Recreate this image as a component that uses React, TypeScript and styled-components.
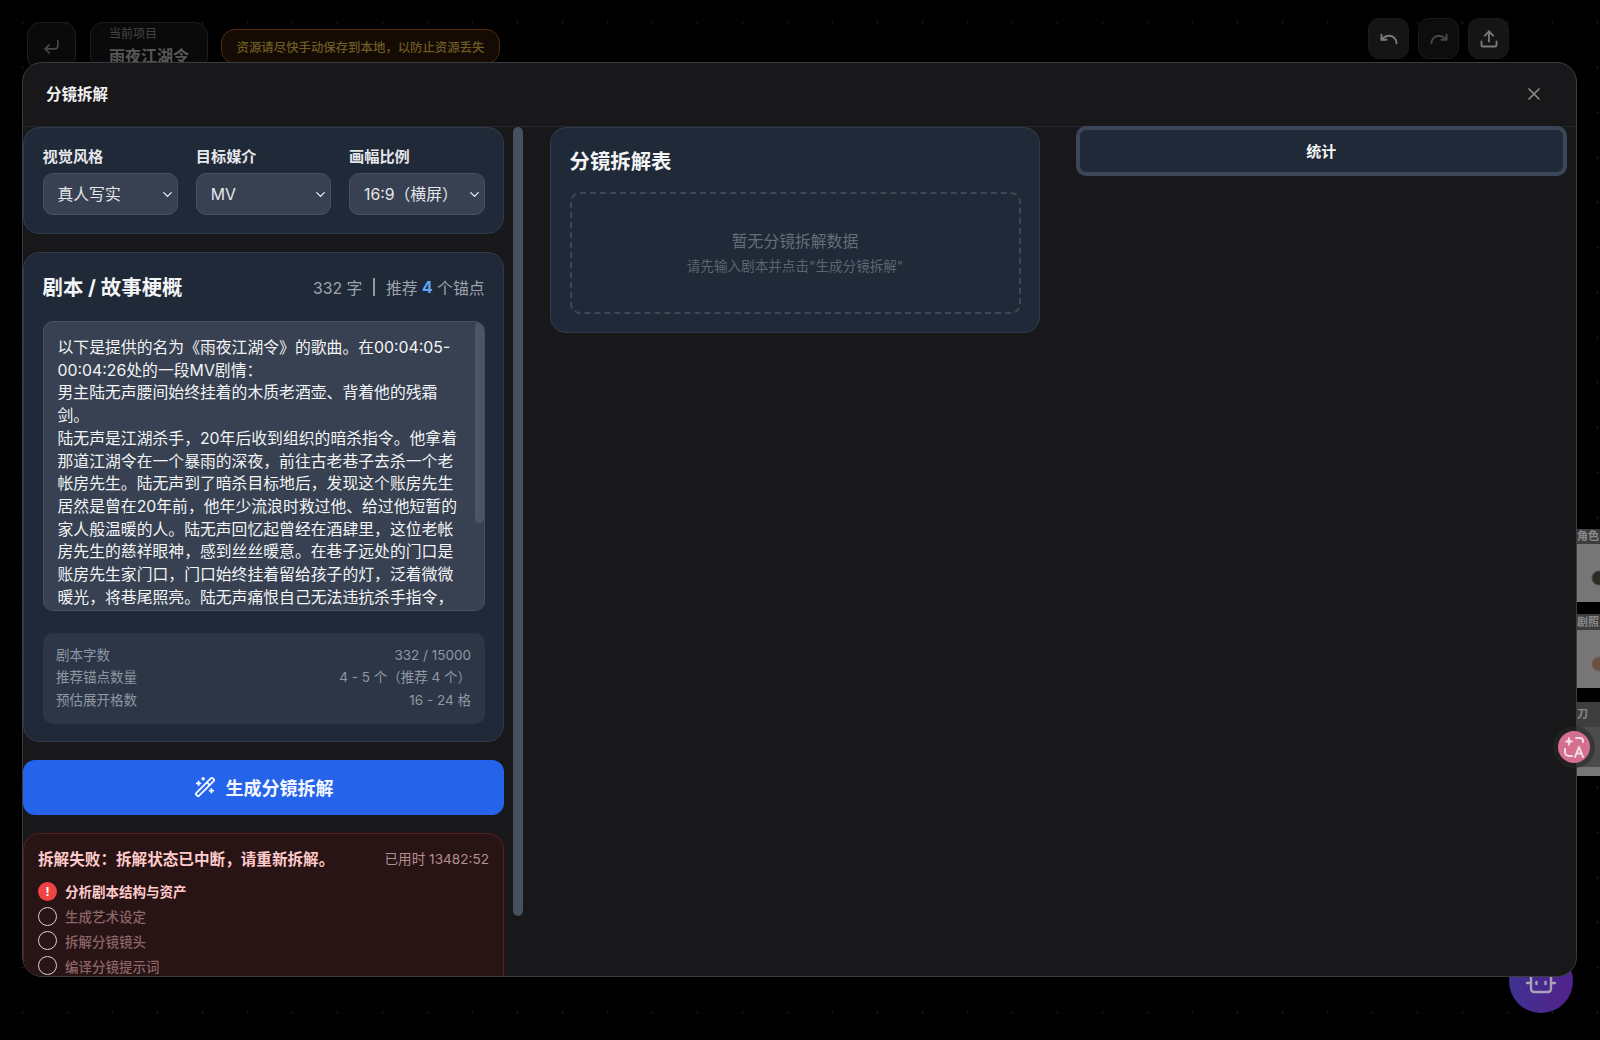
import { createGlobalStyle, styled } from "styled-components";
import {
  ChevronDown,
  CornerDownLeft,
  Redo,
  Undo,
  Upload,
  WandSparkles,
  X,
} from "lucide-react";

const fontStack = `Inter, "Noto Sans CJK SC", "Noto Sans", sans-serif`;

const selects = [
  { label: "视觉风格", value: "真人写实" },
  { label: "目标媒介", value: "MV" },
  { label: "画幅比例", value: "16:9（横屏）" },
];

const scriptLines = [
  "以下是提供的名为《雨夜江湖令》的歌曲。在00:04:05-",
  "00:04:26处的一段MV剧情：",
  "男主陆无声腰间始终挂着的木质老酒壶、背着他的残霜",
  "剑。",
  "陆无声是江湖杀手，20年后收到组织的暗杀指令。他拿着",
  "那道江湖令在一个暴雨的深夜，前往古老巷子去杀一个老",
  "帐房先生。陆无声到了暗杀目标地后，发现这个账房先生",
  "居然是曾在20年前，他年少流浪时救过他、给过他短暂的",
  "家人般温暖的人。陆无声回忆起曾经在酒肆里，这位老帐",
  "房先生的慈祥眼神，感到丝丝暖意。在巷子远处的门口是",
  "账房先生家门口，门口始终挂着留给孩子的灯，泛着微微",
  "暖光，将巷尾照亮。陆无声痛恨自己无法违抗杀手指令，",
];

const stats = [
  { label: "剧本字数", value: "332 / 15000" },
  { label: "推荐锚点数量", value: "4 - 5 个（推荐 4 个）" },
  { label: "预估展开格数", value: "16 - 24 格" },
];

const steps = ["分析剧本结构与资产", "生成艺术设定", "拆解分镜镜头", "编译分镜提示词"];

export default function App() {
  return (
    <>
      <GlobalStyle />
      <Page>
        <TopBar>
          <TopLeft>
            <BackButton>
              <CornerDownLeft size={19} strokeWidth={2} />
            </BackButton>
            <ProjectBox>
              <ProjectCaption>当前项目</ProjectCaption>
              <ProjectName>雨夜江湖令</ProjectName>
            </ProjectBox>
            <WarningPill>资源请尽快手动保存到本地，以防止资源丢失</WarningPill>
          </TopLeft>
          <TopRight>
            <HistoryButton>
              <Undo size={20} strokeWidth={2.4} />
            </HistoryButton>
            <HistoryButton $disabled>
              <Redo size={20} strokeWidth={2.4} />
            </HistoryButton>
            <HistoryButton>
              <Upload size={20} strokeWidth={2.2} />
            </HistoryButton>
          </TopRight>
        </TopBar>

        <ThumbRail>
          <ThumbLabel $height={15}>角色</ThumbLabel>
          <ThumbImage $height={58} $spot="#2c2a22" />
          <ThumbGap $height={12} />
          <ThumbLabel $height={16}>剧照</ThumbLabel>
          <ThumbImage $height={58} $spot="#6b5140" />
          <ThumbGap $height={14} />
          <ThumbLabel $height={25}>刀</ThumbLabel>
          <ThumbImage $height={40} $dark />
          <ThumbImage $height={9} />
        </ThumbRail>

        <BotBubble>
          <svg width="34" height="34" viewBox="0 0 34 34" fill="none" stroke="#a9a3b5" strokeWidth="2.4" strokeLinecap="round">
            <rect x="7" y="7" width="20" height="20" rx="3" />
            <path d="M3 18h4M27 18h4" />
            <path d="M12.500 17v2M21.500 17v2" />
          </svg>
        </BotBubble>

        <Modal>
          <ModalHeader>
            <ModalTitle>分镜拆解</ModalTitle>
            <CloseButton>
              <X size={20} strokeWidth={2} />
            </CloseButton>
          </ModalHeader>

          <ModalBody>
            <LeftColumn>
              <SettingsCard>
                {selects.map((item) => (
                  <Field key={item.label}>
                    <FieldLabel>{item.label}</FieldLabel>
                    <SelectBox>
                      <SelectInput defaultValue={item.value}>
                        <option>{item.value}</option>
                      </SelectInput>
                      <SelectChevron>
                        <ChevronDown size={15} strokeWidth={2.2} />
                      </SelectChevron>
                    </SelectBox>
                  </Field>
                ))}
              </SettingsCard>

              <ScriptCard>
                <ScriptHeader>
                  <CardHeading>剧本 / 故事梗概</CardHeading>
                  <ScriptMeta>
                    332 字<MetaDivider />推荐 <strong>4</strong> 个锚点
                  </ScriptMeta>
                </ScriptHeader>
                <ScriptArea>
                  {scriptLines.map((line) => (
                    <ScriptLine key={line}>{line}</ScriptLine>
                  ))}
                  <ScriptThumb />
                </ScriptArea>
                <StatsBox>
                  {stats.map((row) => (
                    <StatRow key={row.label}>
                      <span>{row.label}</span>
                      <span>{row.value}</span>
                    </StatRow>
                  ))}
                </StatsBox>
              </ScriptCard>

              <GenerateButton>
                <WandSparkles size={22} strokeWidth={2} />
                生成分镜拆解
              </GenerateButton>

              <ErrorCard>
                <ErrorHeader>
                  <ErrorTitle>拆解失败：拆解状态已中断，请重新拆解。</ErrorTitle>
                  <ErrorTime>已用时 13482:52</ErrorTime>
                </ErrorHeader>
                <StepList>
                  {steps.map((step, index) => (
                    <StepRow key={step} $active={index === 0}>
                      {index === 0 ? <StepAlert>!</StepAlert> : <StepCircle />}
                      {step}
                    </StepRow>
                  ))}
                </StepList>
              </ErrorCard>
            </LeftColumn>

            <ScrollTrack>
              <ScrollThumb />
            </ScrollTrack>

            <MiddleColumn>
              <TableCard>
                <CardHeading>分镜拆解表</CardHeading>
                <EmptyBox>
                  <EmptyTitle>暂无分镜拆解数据</EmptyTitle>
                  <EmptyHint>请先输入剧本并点击"生成分镜拆解"</EmptyHint>
                </EmptyBox>
              </TableCard>
            </MiddleColumn>

            <RightColumn>
              <StatsTab>统计</StatsTab>
            </RightColumn>
          </ModalBody>
        </Modal>

        <TranslateBubble>
          <svg width="24" height="24" viewBox="0 0 24 24" fill="none" stroke="#f1dfe4" strokeWidth="2" strokeLinecap="round" strokeLinejoin="round">
            <path d="M7 2.500c.4 2.600 1.400 3.600 4 4-2.600.4-3.600 1.400-4 4-.4-2.600-1.400-3.600-4-4 2.600-.4 3.600-1.400 4-4z" fill="#f1dfe4" strokeWidth="1" />
            <path d="M14 3h4a3 3 0 0 1 3 3v1" />
            <path d="M3 14v3a4 4 0 0 0 4 4h3" />
            <path d="M13 22l4-10 4 10M14.500 18.500h5" />
          </svg>
        </TranslateBubble>
      </Page>
    </>
  );
}

const GlobalStyle = createGlobalStyle`
  html, body {
    margin: 0;
    background: #000;
  }
  * {
    box-sizing: border-box;
  }
`;

const Page = styled.div`
  position: relative;
  width: 1600px;
  height: 1040px;
  overflow: hidden;
  background-color: #000;
  background-image: radial-gradient(circle, #131313 1px, transparent 1.2px);
  background-size: 45px 45px;
  font-family: ${fontStack};
`;

const TopBar = styled.header`
  display: flex;
  justify-content: space-between;
  align-items: flex-start;
  padding: 18px 91px 0 27px;
`;

const TopLeft = styled.div`
  display: flex;
  align-items: flex-start;
  gap: 14px;
  padding-top: 4px;
`;

const TopRight = styled.div`
  display: flex;
  gap: 9px;
`;

const BackButton = styled.div`
  display: flex;
  align-items: center;
  justify-content: center;
  width: 49px;
  height: 48px;
  border: 1px solid #1e1e1e;
  border-radius: 13px;
  background: #0a0a0a;
  color: #4a4a4a;
`;

const ProjectBox = styled.div`
  width: 118px;
  height: 48px;
  padding: 3px 0 0 18px;
  border: 1px solid #1e1e1e;
  border-radius: 13px;
  background: #0a0a0a;
`;

const ProjectCaption = styled.div`
  font-size: 12px;
  line-height: 16px;
  color: #454545;
`;

const ProjectName = styled.div`
  margin-top: 3px;
  font-size: 16px;
  line-height: 22px;
  font-weight: 700;
  color: #575757;
`;

const WarningPill = styled.div`
  display: flex;
  align-items: center;
  justify-content: center;
  width: 279px;
  height: 35px;
  margin: 7px 0 0 -1px;
  border: 1px solid #572a0d;
  border-radius: 14px;
  background: #140b05;
  font-size: 12.4px;
  font-weight: 500;
  color: #6f5c22;
  white-space: nowrap;
`;

const HistoryButton = styled.div<{ $disabled?: boolean }>`
  display: flex;
  align-items: center;
  justify-content: center;
  width: 41px;
  height: 41px;
  border: 1px solid #191919;
  border-radius: 11px;
  background: ${({ $disabled }) => ($disabled ? "#0d0d0d" : "#151515")};
  color: ${({ $disabled }) => ($disabled ? "#484848" : "#7b7b7b")};
`;

const ThumbRail = styled.aside`
  position: absolute;
  top: 529px;
  left: 1570px;
  width: 30px;
  display: flex;
  flex-direction: column;
`;

const ThumbLabel = styled.div<{ $height: number }>`
  height: ${({ $height }) => $height}px;
  padding-left: 7px;
  background: #3e3e3e;
  font-size: 11px;
  font-weight: 700;
  line-height: ${({ $height }) => $height}px;
  color: #8a8a8a;
  white-space: nowrap;
  overflow: hidden;
`;

const ThumbImage = styled.div<{ $height: number; $dark?: boolean; $spot?: string }>`
  height: ${({ $height }) => $height}px;
  background-color: ${({ $dark }) => ($dark ? "#4b4b4b" : "#767676")};
  background-image: ${({ $spot }) =>
    $spot ? `radial-gradient(circle at 29px 34px, ${$spot} 6px, transparent 8px)` : "none"};
`;

const ThumbGap = styled.div<{ $height: number }>`
  height: ${({ $height }) => $height}px;
  background: #000;
`;

const BotBubble = styled.div`
  position: absolute;
  top: 949px;
  left: 1509px;
  width: 64px;
  height: 64px;
  display: flex;
  align-items: flex-end;
  justify-content: center;
  padding-bottom: 14px;
  border-radius: 50%;
  background: linear-gradient(90deg, #3f3290, #52228c);
`;

const TranslateBubble = styled.div`
  position: absolute;
  top: 731px;
  left: 1558px;
  width: 32px;
  height: 32px;
  display: flex;
  align-items: center;
  justify-content: center;
  border-radius: 50%;
  background: #d56f90;
  box-shadow: 0 0 0 5px rgba(40, 40, 40, 0.55);
`;

const Modal = styled.section`
  position: absolute;
  top: 62px;
  left: 22px;
  width: 1555px;
  height: 915px;
  display: flex;
  flex-direction: column;
  overflow: hidden;
  border: 1px solid #3b3c3f;
  border-radius: 20px;
  background: #18181a;
`;

const ModalHeader = styled.div`
  flex: none;
  display: flex;
  align-items: center;
  justify-content: space-between;
  height: 64px;
  padding: 0 32px 3px 23px;
  border-bottom: 1px solid #26272a;
`;

const ModalTitle = styled.h2`
  margin: 0;
  font-size: 15.500px;
  font-weight: 700;
  color: #f1f1f1;
`;

const CloseButton = styled.div`
  display: flex;
  margin-top: 2px;
  color: #8a8a8a;
`;

const ModalBody = styled.div`
  flex: 1;
  min-height: 0;
  display: flex;
  align-items: flex-start;
`;

const LeftColumn = styled.div`
  flex: none;
  width: 481px;
  display: flex;
  flex-direction: column;
  gap: 18px;
`;

const SettingsCard = styled.div`
  display: grid;
  grid-template-columns: repeat(3, 135.500px);
  justify-content: space-between;
  height: 107px;
  padding: 18px 18.500px 0;
  border: 1px solid #2f3b4d;
  border-radius: 16px;
  background: #1f2937;
`;

const Field = styled.div`
  display: flex;
  flex-direction: column;
`;

const FieldLabel = styled.label`
  margin-bottom: 6px;
  font-size: 15.200px;
  line-height: 21px;
  font-weight: 600;
  color: #e5e7eb;
`;

const SelectBox = styled.div`
  position: relative;
`;

const SelectInput = styled.select`
  appearance: none;
  width: 100%;
  height: 42px;
  padding: 0 14px;
  border: 1px solid #465162;
  border-radius: 10px;
  background: #374151;
  font-family: inherit;
  font-size: 15.800px;
  color: #e5e7eb;
`;

const SelectChevron = styled.span`
  position: absolute;
  top: 14px;
  right: 3px;
  display: flex;
  color: #e5e7eb;
  pointer-events: none;
`;

const ScriptCard = styled.div`
  height: 490px;
  padding: 19px 18.500px 0;
  border: 1px solid #2f3b4d;
  border-radius: 16px;
  background: #1f2937;
`;

const ScriptHeader = styled.div`
  display: flex;
  align-items: center;
  justify-content: space-between;
  height: 30px;
`;

const CardHeading = styled.h3`
  margin: 0;
  padding-top: 1px;
  font-size: 20.400px;
  line-height: 30px;
  font-weight: 700;
  color: #f3f4f6;
`;

const ScriptMeta = styled.div`
  display: flex;
  align-items: center;
  font-size: 15.800px;
  color: #9ca3af;
  white-space: pre;

  strong {
    color: #60a5fa;
    font-weight: 700;
  }
`;

const MetaDivider = styled.i`
  width: 1.500px;
  height: 18px;
  margin: 0 11px;
  background: #8f97a3;
`;

const ScriptArea = styled.div`
  position: relative;
  height: 290px;
  margin-top: 19px;
  padding: 15px 14px 0;
  overflow: hidden;
  border: 1px solid #465162;
  border-radius: 10px;
  background: #374151;
`;

const ScriptLine = styled.div`
  font-size: 15.840px;
  line-height: 22.700px;
  color: #f3f4f6;
  white-space: nowrap;
`;

const ScriptThumb = styled.div`
  position: absolute;
  top: 0;
  right: 0;
  width: 9px;
  height: 201px;
  border-radius: 5px;
  background: #4b5563;
`;

const StatsBox = styled.div`
  display: flex;
  flex-direction: column;
  justify-content: center;
  height: 91px;
  margin-top: 22px;
  padding: 0 13.500px 2px;
  border-radius: 10px;
  background: #2c3646;
`;

const StatRow = styled.div`
  display: flex;
  justify-content: space-between;
  font-size: 13.500px;
  line-height: 22.600px;
  color: #8f97a3;
`;

const GenerateButton = styled.button`
  display: flex;
  align-items: center;
  justify-content: center;
  gap: 10px;
  width: 481px;
  height: 55px;
  padding: 0 0 2px;
  border: 0;
  border-radius: 12px;
  background: #2563eb;
  font-family: inherit;
  font-size: 18px;
  font-weight: 600;
  color: #f4f7ff;
`;

const ErrorCard = styled.div`
  height: 200px;
  padding: 12px 14px 0;
  border: 1px solid #5a1d20;
  border-radius: 16px;
  background: #281315;
`;

const ErrorHeader = styled.div`
  display: flex;
  align-items: center;
  justify-content: space-between;
  height: 24px;
`;

const ErrorTitle = styled.div`
  font-size: 15.600px;
  font-weight: 700;
  color: #fecaca;
  white-space: nowrap;
`;

const ErrorTime = styled.div`
  font-size: 13.600px;
  color: #b38f8f;
  white-space: nowrap;
`;

const StepList = styled.div`
  display: flex;
  flex-direction: column;
  margin-top: 9px;
`;

const StepRow = styled.div<{ $active?: boolean }>`
  display: flex;
  align-items: center;
  gap: 8px;
  height: 24.800px;
  font-size: 13.500px;
  font-weight: ${({ $active }) => ($active ? 600 : 500)};
  color: ${({ $active }) => ($active ? "#fecaca" : "#8b6567")};
`;

const StepCircle = styled.span`
  width: 19px;
  height: 19px;
  border: 1.500px solid #d6d3d1;
  border-radius: 50%;
`;

const StepAlert = styled.span`
  display: flex;
  align-items: center;
  justify-content: center;
  width: 19px;
  height: 19px;
  border-radius: 50%;
  background: #ef4444;
  font-size: 12px;
  font-weight: 700;
  color: #fff;
`;

const ScrollTrack = styled.div`
  flex: none;
  width: 10px;
  margin: 0 27px 0 9px;
`;

const ScrollThumb = styled.div`
  height: 789px;
  border-radius: 5px;
  background: #47505f;
`;

const MiddleColumn = styled.div`
  flex: none;
  width: 490px;
`;

const TableCard = styled.div`
  height: 206px;
  padding: 18px 18.500px 0;
  border: 1px solid #2f3b4d;
  border-radius: 16px;
  background: #1f2937;
`;

const EmptyBox = styled.div`
  display: flex;
  flex-direction: column;
  align-items: center;
  justify-content: center;
  gap: 4px;
  height: 122px;
  margin-top: 15px;
  border: 2px dashed #3d4756;
  border-radius: 10px;
`;

const EmptyTitle = styled.div`
  font-size: 15.800px;
  line-height: 22px;
  color: #656d7a;
`;

const EmptyHint = styled.div`
  font-size: 13.600px;
  line-height: 18px;
  color: #5c6470;
`;

const RightColumn = styled.div`
  flex: 1;
  min-width: 0;
  margin-top: -1px;
  padding: 0 9.500px 0 36px;
`;

const StatsTab = styled.div`
  display: flex;
  align-items: center;
  justify-content: center;
  height: 50px;
  padding-bottom: 2px;
  border: 4px solid #3b4759;
  border-radius: 10px;
  background: #1f2937;
  font-size: 15px;
  font-weight: 700;
  color: #f3f4f6;
`;
